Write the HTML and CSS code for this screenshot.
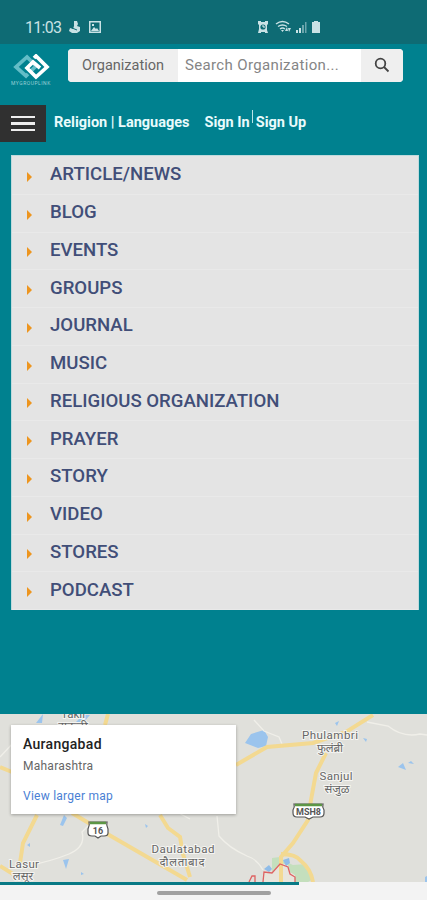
FILE: index.html
```html
<!DOCTYPE html>
<html lang="en">

<head>
  <meta charset="UTF-8">
  <meta name="viewport" content="width=device-width, initial-scale=1.0">
  <title>Religious Organizations</title>
  <link rel="stylesheet" href="styles.css">
</head>

<body>
  <div class="status-bar">
    <span class="time">11:03</span>
    <svg class="status-left" width="34" height="14" viewBox="0 0 34 14" fill="#c9e2e5">
      <path d="M5 1h3l1 3-1 2 3 1v4l-3 2H3l-3-2 1-3 3 1 1-3z" />
      <path d="M3 8l5 2" stroke="#0e6b74" />
      <path fill-rule="evenodd" d="M20 1h12v12H20zM21.500 2.500v9h9v-9z" />
      <path d="M22 11l3-4 2 2 1-1 2 3zM23 4h2v2h-2z" />
    </svg>
    <svg class="status-right" width="65" height="15" viewBox="0 0 65 15" fill="#c9e2e5">
      <path d="M1 1h3v1h4V1h3v3l-1 1v5l1 3H8v-1H4v1H1l1-4V5L1 4z" />
      <circle cx="6" cy="7" r="2.600" fill="#0e6b74" />
      <path d="M6 5v2h2" fill="none" stroke="#e6f2f3" />
      <g fill="none" stroke="#c9e2e5" stroke-width="1.400">
        <path d="M19 4q6.500-5 13 0M21 6.500q4.500-3 9 0M23 9q2.500-2 5 0" />
      </g>
      <path d="M24 10h3l-1.500 2zM28 11l2-4 1 4zM31 8h3l-2 4z" />
      <path d="M39 10h2v3h-2zM42 8h2v5h-2z" />
      <path d="M45 5h2v8h-2zM48 2h1.500v11H48z" opacity=".5" />
      <path d="M57 1h4v1h2v11h-8V2h2z" />
    </svg>
  </div>

  <header>
    <div class="top-row">
      <div class="logo">
        <svg width="38" height="26" viewBox="0 0 38 26" fill="none" stroke-width="3.700">
          <path d="M16 20l-2 2-10-9L15 3l9 9-5 5" stroke="#63bdc7" />
          <path d="M22 4l2-2 11 11-11 10-9-9 6-6 7 6" stroke="#fff" />
        </svg>
        <span>MYGROUPLINK</span>
      </div>
      <form class="search" action="#">
        <span class="search-type">Organization</span>
        <input type="text" placeholder="Search Organization...">
        <button type="submit" aria-label="Search">
          <svg width="16" height="16" viewBox="0 0 16 16" fill="none" stroke="#444" stroke-width="1.800">
            <circle cx="6.500" cy="6.500" r="4.800" />
            <path d="M10 10l4.500 4.500" />
          </svg>
        </button>
      </form>
    </div>

    <nav>
      <div class="menu-btn"><i></i><i></i><i></i></div>
      <a class="languages" href="#">Religion | Languages</a>
      <a href="#">Sign In</a>
      <span class="divider"></span>
      <a href="#">Sign Up</a>
    </nav>
  </header>

  <ul class="menu">
    <li>ARTICLE/NEWS</li>
    <li>BLOG</li>
    <li>EVENTS</li>
    <li>GROUPS</li>
    <li>JOURNAL</li>
    <li>MUSIC</li>
    <li>RELIGIOUS ORGANIZATION</li>
    <li>PRAYER</li>
    <li>STORY</li>
    <li>VIDEO</li>
    <li>STORES</li>
    <li>PODCAST</li>
  </ul>

  <section class="map">
    <svg width="427" height="168" viewBox="0 0 427 168">
      <!-- water and parks -->
      <g fill="#9bc4ed">
        <path d="M245 29l6-9 13-4 4 7-2 9-8 2zM36 9l7-9-1 9zM75 9l8-8 7 0-7 8zM60 111l4-10 3 3-4 8zM63 146l6-1-3 10zM398 53l5-4 3 7zM408 49l3-2 3 3zM145 110l3 2-2 2zM363 24l4 1-1 3zM425 163l2-1v6h-2zM27 131l3-2v4zM81 158l3 2-3 1zM335 9l4-2-2 5z" />
      </g>
      <path d="M272 144l8-1 4 4 9 4 13-1 7 15-5 3h-36z" fill="#c4dfbd" />
      <path d="M263 168l1-11 8 1 9-9 7 2 2 7 5 3v7z" fill="#e8e5dc" />
      <path d="M264 155l5-4 3 4-3 3zM283 146l6-2 1 5-4 3z" fill="#8fbce8" />
      <!-- small roads -->
      <g fill="none" stroke="#f0efe9" stroke-width="1.300">
        <path d="M27 152q25-5 42-12t13-22l8-8M254 6l10 11 15 6 3 7M367 8l21 4q15 12 32 8l7 1M217 102l2 20q10 12 28 20 10 3 16 14M177 98l13 7M0 43l14-15" />
      </g>
      <!-- highways -->
      <g fill="none" stroke="#f3d991" stroke-width="4">
        <path d="M0 53l12 5M37 101l-14 28-3 20M0 152l13 8M72 99l25 15 90 52M160 101l8 13 12 9 3 17 7 23M108 0l-3 11" />
        <path d="M236 51l31-18 46-4 33-11 27-17M326 39l-10 20-5 27-3 20-15 23-12 14v25M281 140q15 0 20 7 10 8 12 21" />
      </g>
      <path d="M263 168l1-10 8 1 8-9 8 3 2 7 5 3v5M249 168l3-6h3v6" fill="none" stroke="#de6363" stroke-width="1.300" />
      <!-- road shields -->
      <g fill="#fff" stroke="#555" stroke-width="1.200">
        <path d="M89 108h18q-1 3 1 7v4q0 3-4 3h-3l-3 2-3-2h-3q-4 0-4-3v-4q2-4 1-7z" />
        <path d="M294 90h29q-1 3 1 6v3q0 4-4 4h-7l-4 2-4-2h-8q-4 0-4-4v-3q2-3 1-6z" />
      </g>
      <path d="M90 109h16M295 91h27" stroke="#5c9645" stroke-width="2.500" />
      <g class="shield">
        <text x="98" y="120">16</text>
        <text x="308.500" y="101" textLength="25">MSH8</text>
      </g>
      <g class="place">
        <text x="73" y="4">Takli</text>
        <text x="73" y="16">टाकळी</text>
        <text x="330" y="25" textLength="56">Phulambri</text>
        <text x="330" y="38">फुलंब्री</text>
        <text x="336" y="66" textLength="33">Sanjul</text>
        <text x="337" y="79">संजुळ</text>
        <text x="183" y="139" textLength="63">Daulatabad</text>
        <text x="182" y="152" textLength="45">दौलताबाद</text>
        <text x="24" y="154" textLength="30">Lasur</text>
        <text x="23" y="166">लसूर</text>
      </g>
    </svg>
    <div class="map-card">
      <h3>Aurangabad</h3>
      <p>Maharashtra</p>
      <a href="#">View larger map</a>
    </div>
  </section>

  <footer>
    <div class="progress"></div>
    <div class="home-bar"></div>
  </footer>
</body>

</html>
```
FILE: styles.css
```css
* {
  box-sizing: border-box;
}

body {
  margin: 0;
  height: 900px;
  overflow: hidden;
  display: flex;
  flex-direction: column;
  background-color: #00818f;
  font-family: Roboto, "Liberation Sans", sans-serif;
}

a {
  text-decoration: none;
}

.status-bar {
  height: 44px;
  padding: 10px 0 0 25px;
  display: flex;
  align-items: center;
  background-color: #0e6b74;
  color: #c9e2e5;
}

.time {
  width: 44px;
  font-size: 16px;
  letter-spacing: -0.7px;
}

.status-right {
  margin-left: 154px;
}

.top-row {
  display: flex;
  height: 56px;
  padding: 5px 0 0 10px;
}

.logo {
  width: 58px;
  display: flex;
  flex-direction: column;
  padding: 5px 0 0 2px;
}

.logo span {
  width: 42px;
  margin: 0 0 0 -1px;
  font-size: 5px;
  line-height: 6px;
  letter-spacing: 0.5px;
  color: #9bd0d6;
}

.search {
  display: flex;
  width: 335px;
  height: 33px;
  border-radius: 4px;
  overflow: hidden;
  background-color: #fff;
}

.search-type {
  width: 110px;
  padding-left: 14px;
  background-color: #efefef;
  color: #666;
  font-size: 14.5px;
  line-height: 33px;
}

.search input {
  width: 183px;
  padding: 0 0 2px 7px;
  border: none;
  font-family: inherit;
  font-size: 15px;
  letter-spacing: 0.35px;
}

.search input::placeholder {
  color: #858585;
}

.search button {
  width: 42px;
  padding: 2px 0 0;
  border: none;
  background-color: #efefef;
}

nav {
  display: flex;
  align-items: center;
  height: 37px;
  margin-top: 5px;
}

nav a {
  color: #e9fbfc;
  font-size: 14.5px;
  font-weight: bold;
  padding-bottom: 2px;
}

.menu-btn {
  width: 46px;
  height: 37px;
  margin-right: 8px;
  display: flex;
  flex-direction: column;
  align-items: center;
  justify-content: center;
  gap: 4px;
  background-color: #303030;
}

.menu-btn i {
  width: 24px;
  height: 2.5px;
  background-color: #eee;
}

.languages {
  margin-right: 15px;
}

.divider {
  width: 1px;
  height: 13px;
  margin: 0 3px 14px 2px;
  background-color: #b9e4e8;
}

.menu {
  width: 408px;
  height: 455px;
  margin: 13px 0 0 11px;
  padding: 1px 0 0;
  list-style: none;
  background-color: #e4e4e4;
  border: 1px solid #bfdadd;
}

.menu li {
  display: flex;
  align-items: center;
  height: 37.75px;
  padding: 0 0 2px 38px;
  border-bottom: 1px solid #e9e9e9;
  color: #414e78;
  font-size: 18.6px;
  font-weight: 500;
}

.menu li::before {
  content: "";
  margin: 5px 18px 0 -23px;
  border: solid transparent;
  border-width: 5px 0 5px 5px;
  border-left-color: #ed951f;
}

.map {
  position: relative;
  height: 168px;
  margin-top: auto;
  background-color: #e0e0db;
}

.map svg {
  display: block;
}

.place {
  font-size: 11.5px;
  font-family: Roboto, "Noto Sans", "Noto Sans Devanagari", sans-serif;
  text-anchor: middle;
  fill: #666;
  stroke: #f5f5f2;
  stroke-width: 2px;
  paint-order: stroke;
}

.shield {
  font-size: 9px;
  font-weight: bold;
  text-anchor: middle;
  fill: #555;
}

.map-card {
  position: absolute;
  top: 11px;
  left: 11px;
  width: 225px;
  height: 89px;
  padding: 11px 12px;
  background-color: #fff;
  box-shadow: 0 1px 3px rgba(0, 0, 0, 0.3);
}

.map-card h3 {
  margin: 0;
  font-size: 14px;
  line-height: 17px;
  font-weight: 500;
  letter-spacing: 0.3px;
  color: #222;
}

.map-card p {
  margin: 6px 0 15px;
  font-size: 12px;
  line-height: 15px;
  letter-spacing: 0.25px;
  color: #666;
}

.map-card a {
  display: block;
  font-size: 12px;
  line-height: 14px;
  letter-spacing: 0.25px;
  color: #4a80d4;
}

footer {
  height: 18px;
  background-color: #f3f3f3;
}

.progress {
  width: 299px;
  height: 3px;
  background-color: #087985;
}

.home-bar {
  width: 114px;
  height: 4px;
  margin: 6px 0 0 157px;
  border-radius: 2px;
  background-color: #a0a0a0;
}
```
